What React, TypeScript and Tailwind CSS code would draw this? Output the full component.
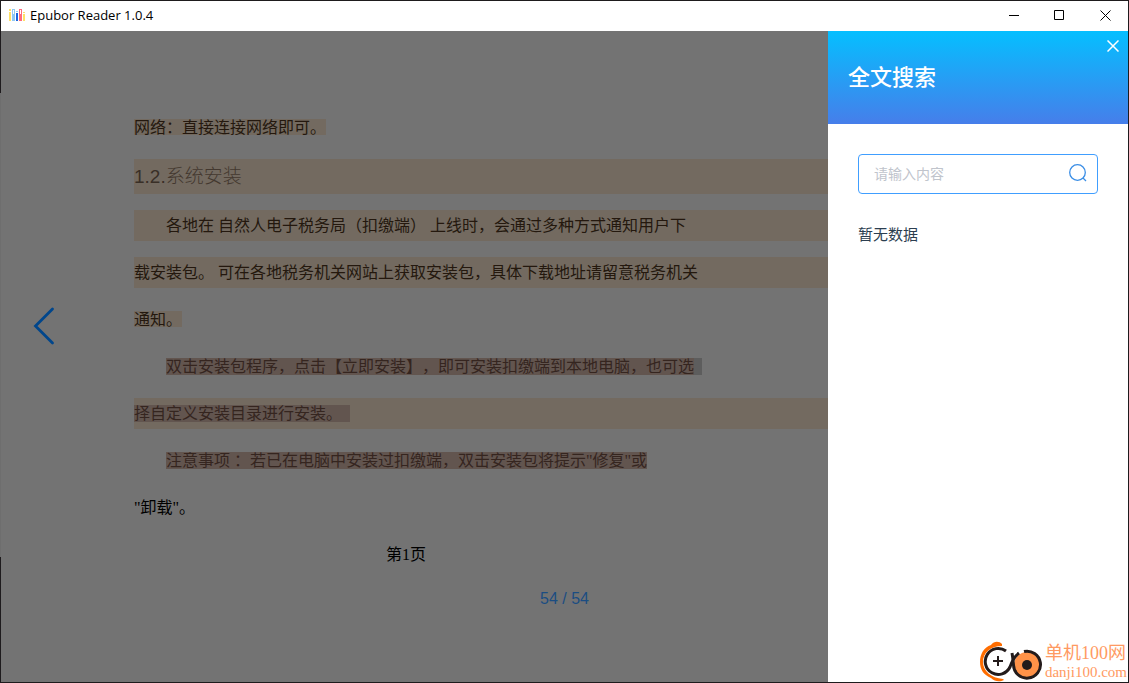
import { useState } from 'react'
import type { ReactNode } from 'react'
import { clsx } from 'clsx'

function AppIcon() {
  return (
    <svg viewBox="0 0 16 12" className="h-3 w-4" aria-hidden="true" shapeRendering="crispEdges">
      <path d="M0 0h2v2H0z M0 3h2v9H0z M14 5h2v7h-2z M14 3h2v1h-2z" fill="#ffe066" />
      <path d="M3 0h3v12H3z M7 2h2v1H7z" fill="#8fc9f5" />
      <path d="M4 1h1v4H4z" fill="#fff" />
      <path d="M7 4h2v8H7z" fill="#1a66e0" />
      <path d="M10 0h3v12h-3z" fill="#ff6b7d" />
      <path d="M11 1h1v4h-1z" fill="#fff" />
    </svg>
  )
}

function WindowButton({ label, children }: { label: string; children: ReactNode }) {
  return (
    <button type="button" aria-label={label} className="flex h-full w-[46px] items-center justify-center hover:bg-gray-200">
      <svg viewBox="0 0 11 11" className="size-[11px]" fill="none" stroke="#000" aria-hidden="true">
        {children}
      </svg>
    </button>
  )
}

function TitleBar() {
  return (
    <header className="flex h-[30px] shrink-0 items-center justify-between bg-white pb-0.5 pl-2">
      <div className="flex items-center gap-[5px]">
        <AppIcon />
        <h1 className="font-['Open_Sans','Noto_Sans_CJK_SC',sans-serif] text-[13px] leading-5 text-black">Epubor Reader 1.0.4</h1>
      </div>
      <div className="flex h-full">
        <WindowButton label="Minimize">
          <path d="M1 5.5h10" />
        </WindowButton>
        <WindowButton label="Maximize">
          <path d="M0.5 0.5h9v9h-9z" />
        </WindowButton>
        <WindowButton label="Close">
          <path d="M0.5 0.5l10 10M10.5 0.5l-10 10" />
        </WindowButton>
      </div>
    </header>
  )
}

type LineProps = {
  children: ReactNode
  indent?: boolean
  block?: boolean
  lineBreak?: boolean
  mark?: 'note' | 'selected'
}

function Line({ children, indent, block, lineBreak, mark }: LineProps) {
  return (
    <p
      className={clsx(
        'flex h-[31px] items-start pt-[7px] leading-[18px]',
        indent && 'pl-8',
        block && 'bg-[#736a60]',
        mark === 'selected' ? 'text-[#35251f]' : mark || block ? 'text-[#24180e]' : 'text-black'
      )}
    >
      <span
        className={clsx(
          mark === 'note' && 'h-4 bg-[#736a60]',
          mark === 'selected' && 'h-[17px] bg-[#62554f]'
        )}
      >
        {children}
      </span>
      {lineBreak && <span className="h-[17px] w-2 bg-[#5d5d5d]" />}
    </p>
  )
}

function Page() {
  return (
    <article className="flex flex-col gap-4 overflow-hidden whitespace-pre pl-[133px] pt-[81px] font-['Liberation_Serif','Noto_Sans_CJK_SC',sans-serif] text-base [text-spacing-trim:space-all]">
      <Line mark="note">网络：直接连接网络即可。</Line>
      <h2 className="h-[35px] bg-[#736a60] font-['Liberation_Sans','Noto_Sans_CJK_SC',sans-serif] text-[19px] leading-[35px] font-light text-[#43382f]">
        <span className="text-[#392f27]">1.2.</span>系统安装
      </h2>
      <Line indent block>各地在 自然人电子税务局（扣缴端） 上线时，会通过多种方式通知用户下</Line>
      <Line block>载安装包。 可在各地税务机关网站上获取安装包，具体下载地址请留意税务机关</Line>
      <Line mark="note">通知。</Line>
      <Line indent lineBreak mark="selected">双击安装包程序，点击【立即安装】，即可安装扣缴端到本地电脑，也可选</Line>
      <Line block mark="selected">{'择自定义安装目录进行安装。  '}</Line>
      <Line indent mark="selected">注意事项 ：若已在电脑中安装过扣缴端，双击安装包将提示"修复"或</Line>
      <Line>"卸载"。</Line>
      <div className="flex w-[544px] justify-center">
        <Line>第1页</Line>
      </div>
    </article>
  )
}

function Reader() {
  return (
    <main className="relative min-w-0 flex-1 overflow-hidden bg-[#737373]">
      <Page />
      <div className="pl-[539px] pt-[17px] font-['Liberation_Sans',sans-serif] text-base leading-6 text-[#1b4d82]">54 / 54</div>
      <button type="button" aria-label="Previous page" className="absolute left-8 top-[276px]">
        <svg viewBox="0 0 22 38" className="h-[38px] w-[22px]" fill="none" stroke="#00468c" strokeWidth="2.8" strokeLinecap="round" aria-hidden="true">
          <path d="M19.500 2L2.500 19L19.500 36" />
        </svg>
      </button>
    </main>
  )
}

function BrandMark() {
  return (
    <div className="flex items-end justify-end pr-px">
      <svg viewBox="0 0 66 42" className="h-[42px] w-[66px]" fill="none" aria-hidden="true">
        <path d="M23 4C20 1 15 1 12 5C5 7 1 14 1 22c0 8 4 13 11 16c4 4 9 4 13 2l-1-1C12 38 4 31 4 22C4 13 11 6 23 6z" fill="#ff6d00" />
        <circle cx="48" cy="25" r="13" fill="#ff9248" />
        <g stroke="#231b1b" strokeWidth="3">
          <path d="M27 11A13 13 0 1 0 31 27C33 21 36 16 40 13" />
          <path d="M33 13C34 18 34 21 34.500 25A13.500 13.500 0 1 0 45 11.500" />
        </g>
        <path d="M19 16v10M14 21h10" stroke="#231b1b" strokeWidth="2" />
        <circle cx="48" cy="25" r="5" fill="#231b1b" />
      </svg>
      <div className="font-['Liberation_Serif','Noto_Sans_CJK_SC',serif] text-[#ff9a62]">
        <div className="text-lg leading-[19px]">单机100网</div>
        <div className="text-[15px] leading-[19px]">danji100.com</div>
      </div>
    </div>
  )
}

function SearchPanel() {
  const [query, setQuery] = useState('')

  return (
    <aside className="flex w-[300px] shrink-0 flex-col bg-white font-['Noto_Sans_CJK_SC',sans-serif]">
      <div className="relative flex h-[93px] items-center bg-linear-to-b/srgb from-[#05bfff] to-[#467eea] px-5 pb-1.5">
        <h2 className="text-[22px] leading-8 font-medium text-white">全文搜索</h2>
        <button type="button" aria-label="Close search" className="absolute right-[9px] top-[9px]">
          <svg viewBox="0 0 12 12" className="size-3" stroke="#fff" strokeWidth="1.5" aria-hidden="true">
            <path d="M0.500 0.500l11 11M11.500 0.500l-11 11" />
          </svg>
        </button>
      </div>
      <div className="flex-1 p-[30px]">
        <form role="search" onSubmit={(e) => e.preventDefault()} className="flex h-10 items-center rounded border border-[#409eff] pb-0.5 pl-[15px] pr-[10px]">
          <input
            aria-label="全文搜索"
            value={query}
            onChange={(e) => setQuery(e.target.value)}
            placeholder="请输入内容"
            className="min-w-0 flex-1 text-sm text-[#606266] outline-none placeholder:text-[#c0c4cc]"
          />
          <button type="submit" aria-label="Search">
            <svg viewBox="0 0 18 18" className="size-[18px]" fill="none" stroke="#3a8ee6" strokeWidth="1.3" aria-hidden="true">
              <circle cx="8.500" cy="8.500" r="7.800" />
              <path d="M14 14l3 3" />
            </svg>
          </button>
        </form>
        <p className="mt-[30px] text-[15px] leading-5 text-[#2c3e50]">暂无数据</p>
      </div>
      <BrandMark />
    </aside>
  )
}

export default function App() {
  return (
    <div className="flex h-screen flex-col overflow-hidden border-y border-r border-[#1e1b1d] bg-[linear-gradient(#1e1b1d_92px,#6e6e6e_92px,#6e6e6e_556px,#1e1b1d_556px)] pl-px">
      <TitleBar />
      <div className="flex min-h-0 flex-1">
        <Reader />
        <SearchPanel />
      </div>
    </div>
  )
}
